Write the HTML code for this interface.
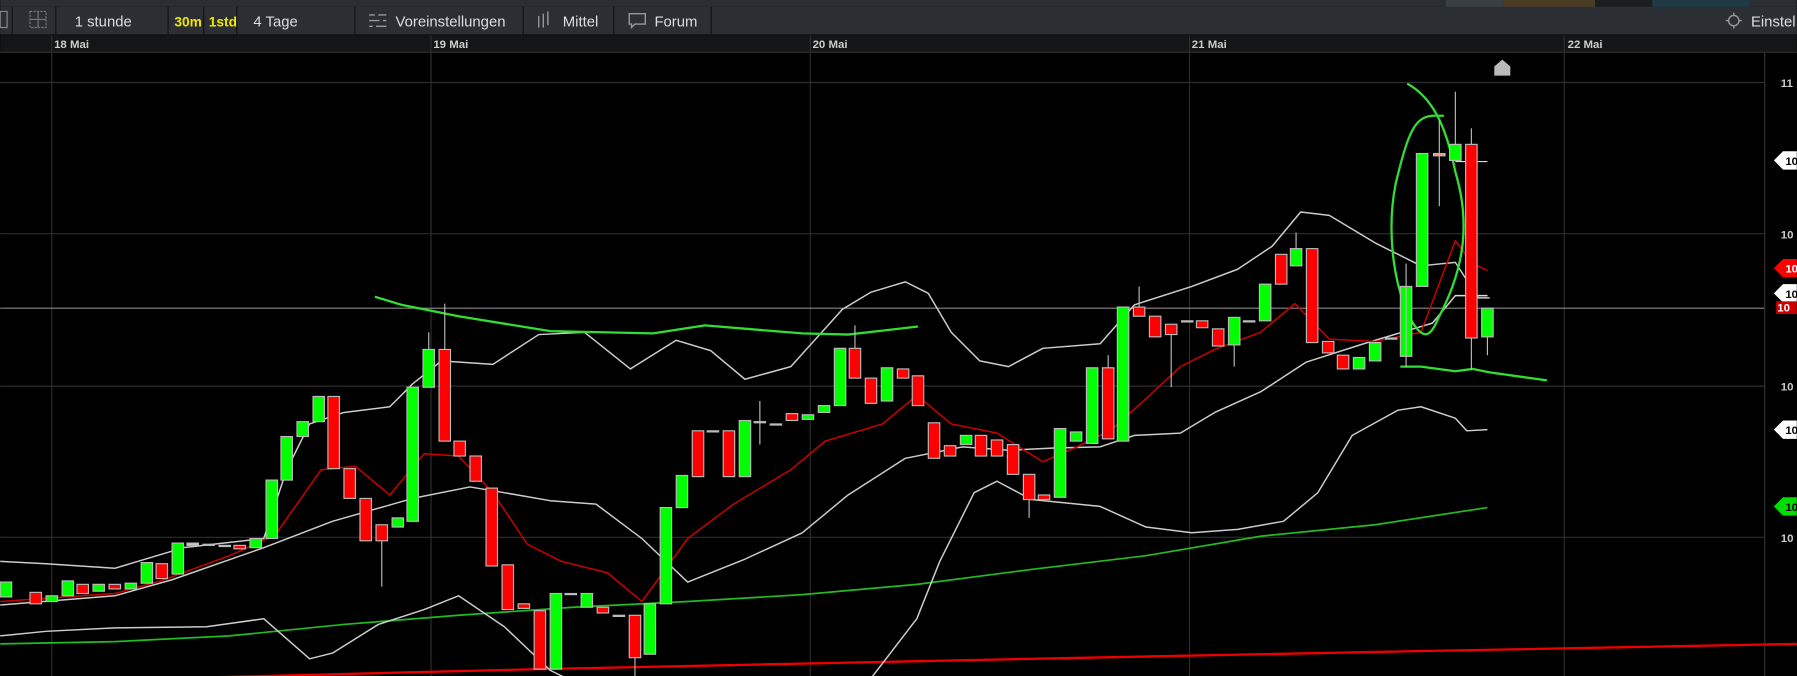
<!DOCTYPE html>
<html><head><meta charset="utf-8"><style>
html,body{margin:0;padding:0;background:#000;overflow:hidden}
svg{display:block}
text{font-family:"Liberation Sans",sans-serif}
</style></head><body>
<svg width="1797" height="676" viewBox="0 0 1568 590" xmlns="http://www.w3.org/2000/svg">
<rect width="1568" height="590" fill="#000"/>
<!-- top strip -->
<rect x="0" y="0" width="1568" height="6" fill="#2a2d31"/>
<rect x="1262" y="0" width="50" height="6" fill="#3a3f44"/>
<rect x="1312" y="0" width="80" height="6" fill="#4a3d24"/>
<rect x="1392" y="0" width="50" height="6" fill="#1c1f22"/>
<rect x="1442" y="0" width="85" height="6" fill="#1f3a44"/>
<!-- toolbar -->
<rect x="0" y="6" width="1568" height="24" fill="#2b2e33"/>
<rect x="0" y="30" width="1568" height="1" fill="#111"/>
<g fill="none" stroke="#111" stroke-width="1">
<line x1="10.5" y1="6" x2="10.5" y2="30"/><line x1="48.5" y1="6" x2="48.5" y2="30"/>
<line x1="146.5" y1="6" x2="146.5" y2="30"/><line x1="177.5" y1="6" x2="177.5" y2="30"/>
<line x1="206.5" y1="6" x2="206.5" y2="30"/><line x1="309.5" y1="6" x2="309.5" y2="30"/>
<line x1="456.5" y1="6" x2="456.5" y2="30"/><line x1="535.5" y1="6" x2="535.5" y2="30"/>
<line x1="620.5" y1="6" x2="620.5" y2="30"/>
</g>
<rect x="0" y="10" width="6" height="14" fill="none" stroke="#888" stroke-width="1"/>
<rect x="26" y="10" width="14" height="14" fill="none" stroke="#777" stroke-width="1" stroke-dasharray="2,1"/>
<line x1="26" y1="17" x2="40" y2="17" stroke="#777"/><line x1="33" y1="10" x2="33" y2="24" stroke="#777"/>
<g font-size="13" fill="#ddd">
<text x="65" y="23">1 stunde</text>
<text x="152" y="23" fill="#f2e600" font-weight="bold" font-size="12">30m</text>
<text x="182" y="23" fill="#f2e600" font-weight="bold" font-size="12">1std</text>
<text x="221" y="23">4 Tage</text>
<text x="345" y="23">Voreinstellungen</text>
<text x="491" y="23">Mittel</text>
<text x="571" y="23">Forum</text>
<text x="1528" y="23">Einstel</text>
</g>
<g stroke="#999" stroke-width="1.2" fill="none">
<path d="M322 13h5M330 13h7M322 18h9M334 18h3M322 23h3M328 23h9"/>
<path d="M470 14v10M474 12v12M478 10v12" />
<path d="M549 12h14v9h-9l-3 3v-3h-2z"/>
<circle cx="1513" cy="18" r="4.5"/>
<path d="M1513 11v2M1513 23v2M1506 18h2M1518 18h2"/>
</g>
<!-- date bar -->
<rect x="0" y="31" width="1568" height="14" fill="#141516"/>
<g font-size="10" fill="#ccc" font-weight="bold">
<text x="47" y="42">18 Mai</text><text x="378" y="42">19 Mai</text><text x="709" y="42">20 Mai</text>
<text x="1040" y="42">21 Mai</text><text x="1368" y="42">22 Mai</text>
</g>
<rect x="0" y="45" width="1568" height="1" fill="#333"/>
<!-- grid -->
<g stroke="#2e2e2e" stroke-width="1">
<line x1="45" y1="31" x2="45" y2="590"/><line x1="376" y1="31" x2="376" y2="590"/>
<line x1="707" y1="31" x2="707" y2="590"/><line x1="1038" y1="31" x2="1038" y2="590"/>
<line x1="1365" y1="31" x2="1365" y2="590"/>
<line x1="0" y1="72" x2="1540" y2="72"/><line x1="0" y1="204" x2="1540" y2="204"/>
<line x1="0" y1="337" x2="1540" y2="337"/><line x1="0" y1="469" x2="1540" y2="469"/>
</g>
<line x1="0" y1="269" x2="1540" y2="269" stroke="#888" stroke-width="1"/>
<!-- right axis -->
<line x1="1540" y1="45" x2="1540" y2="590" stroke="#333"/>
<g font-size="10" fill="#ccc" font-weight="bold">
<text x="1554" y="76">11</text><text x="1554" y="208">10</text><text x="1554" y="341">10</text><text x="1554" y="473">10</text>
</g>
<path d="M1548 140l8-8h12v16h-12z" fill="#fff"/><text x="1558" y="144" font-size="10" fill="#000" font-weight="bold">10</text>
<path d="M1548 234l8-8h12v16h-12z" fill="#f00"/><text x="1558" y="238" font-size="10" fill="#fff" font-weight="bold">10</text>
<path d="M1548 256l8-8h12v16h-12z" fill="#fff"/><text x="1558" y="260" font-size="10" fill="#000" font-weight="bold">10</text>
<rect x="1550" y="263" width="18" height="11" fill="#c00"/><text x="1551" y="272" font-size="10" fill="#fff" font-weight="bold">10</text>
<path d="M1548 375l8-8h12v16h-12z" fill="#fff"/><text x="1558" y="379" font-size="10" fill="#000" font-weight="bold">10</text>
<path d="M1548 442l8-8h12v16h-12z" fill="#0d0"/><text x="1558" y="446" font-size="10" fill="#000" font-weight="bold">10</text>
<path d="M1304 58l7-6 7 6v8h-14z" fill="#bbb"/>
<!-- indicator lines -->
<g fill="none" stroke-linejoin="round">
<polyline stroke="#22bb22" stroke-width="1.5" points="0,562 100,560 200,555 300,545 400,537 500,530 600,525 700,519 800,510 900,497 1000,485 1100,468 1200,458 1298,443"/>
<polyline stroke="#e00" stroke-width="2" points="150,592 470,584 900,575 1200,569 1568,562"/>
<polyline stroke="#ccc" stroke-width="1.3" points="0,490 40,492 100,496 160,478 230,470 250,410 270,370 300,360 340,355 360,335 385,315 430,318 470,292 510,290 550,322 590,297 620,306 650,331 690,320 735,270 760,255 790,246 810,256 830,290 855,315 880,320 910,304 960,300 990,266 1040,250 1080,235 1110,215 1135,185 1160,188 1200,212 1240,232 1270,229 1290,260 1300,260"/>
<polyline stroke="#ccc" stroke-width="1.3" points="0,555 40,551 100,548 180,547 230,540 270,575 290,570 330,545 370,532 400,520 440,547 480,585 500,595"/>
<polyline stroke="#ccc" stroke-width="1.3" points="760,592 800,540 820,490 850,430 870,420 900,436 960,442 1000,460 1040,465 1080,462 1120,455 1150,430 1180,380 1220,358 1240,355 1270,365 1280,376 1298,375"/>
<polyline stroke="#ccc" stroke-width="1.3" points="0,528 100,520 150,506 230,478 290,455 360,435 410,425 440,430 480,437 520,440 560,470 600,508 650,488 700,465 740,432 790,400 840,390 880,393 920,391 960,390 990,380 1030,378 1060,360 1100,342 1140,316 1190,300 1250,282 1270,258 1298,258"/>
<polyline stroke="#c00" stroke-width="1.3" points="0,525 100,518 140,507 200,485 240,467 280,410 310,407 340,432 370,396 400,398 430,430 460,475 490,490 530,500 560,525 600,470 640,440 690,410 720,385 770,370 800,345 830,370 870,378 910,403 940,390 970,375 1000,348 1030,320 1060,305 1100,290 1130,265 1160,296 1200,298 1240,290 1270,210 1285,230 1298,236"/>
<polyline stroke="#3d3" stroke-width="2" points="327,259 350,266 400,276 480,289 570,291 615,284 700,291 740,292 801,285"/>
<polyline stroke="#3d3" stroke-width="2" points="1222,320 1240,320 1270,324 1285,322 1300,325 1350,332"/>
<path stroke="#3d3" stroke-width="2" d="M1228,73 C1250,85 1262,110 1270,150 C1285,200 1275,240 1255,278 C1248,295 1242,296 1233,282 C1215,250 1210,200 1218,160 C1230,110 1236,100 1255,101 L1260,101"/>
<line x1="1270" y1="141" x2="1298" y2="141" stroke="#ddd"/>
<line x1="1270" y1="258" x2="1298" y2="258" stroke="#ddd"/>
</g>
<!-- candles -->
<g id="c" stroke="#bbb" stroke-width="1">
<script type="text/plain"></script>
</g>
<g stroke="#bbb" stroke-width="1">
<!-- x,top,bottom,color -->
<rect x="0" y="508" width="10" height="13" fill="#0f0"/>
<rect x="26" y="517" width="10" height="10" fill="#f00"/>
<rect x="40" y="520" width="10" height="5" fill="#0f0"/>
<rect x="54" y="507" width="10" height="13" fill="#0f0"/>
<rect x="67" y="510" width="10" height="8" fill="#f00"/>
<rect x="81" y="510" width="10" height="6" fill="#0f0"/>
<rect x="95" y="510" width="10" height="4" fill="#f00"/>
<rect x="109" y="509" width="10" height="5" fill="#0f0"/>
<rect x="123" y="491" width="10" height="18" fill="#0f0"/>
<rect x="136" y="492" width="10" height="13" fill="#f00"/>
<rect x="150" y="474" width="10" height="27" fill="#0f0"/>
<rect x="163" y="474" width="10" height="2" fill="#ccc"/>
<rect x="177" y="475" width="10" height="1" fill="#ccc"/>
<rect x="191" y="476" width="10" height="1" fill="#ccc"/>
<rect x="204" y="476" width="10" height="3" fill="#f00"/>
<rect x="218" y="470" width="10" height="8" fill="#0f0"/>
<rect x="232" y="419" width="10" height="51" fill="#0f0"/>
<rect x="245" y="381" width="10" height="38" fill="#0f0"/>
<rect x="259" y="368" width="10" height="13" fill="#0f0"/>
<rect x="273" y="346" width="10" height="22" fill="#0f0"/>
<rect x="286" y="346" width="10" height="63" fill="#f00"/>
<rect x="300" y="409" width="10" height="26" fill="#f00"/>
<rect x="314" y="435" width="10" height="37" fill="#f00"/>
<rect x="328" y="458" width="10" height="14" fill="#f00"/>
<rect x="342" y="452" width="10" height="8" fill="#0f0"/>
<rect x="355" y="338" width="10" height="117" fill="#0f0"/>
<rect x="369" y="305" width="10" height="33" fill="#0f0"/>
<rect x="383" y="305" width="10" height="80" fill="#f00"/>
<rect x="396" y="385" width="10" height="13" fill="#f00"/>
<rect x="410" y="398" width="10" height="22" fill="#f00"/>
<rect x="424" y="426" width="10" height="68" fill="#f00"/>
<rect x="438" y="493" width="10" height="39" fill="#f00"/>
<rect x="452" y="527" width="10" height="4" fill="#f00"/>
<rect x="466" y="533" width="10" height="51" fill="#f00"/>
<rect x="480" y="518" width="10" height="66" fill="#0f0"/>
<rect x="493" y="518" width="10" height="1" fill="#ccc"/>
<rect x="507" y="518" width="10" height="12" fill="#0f0"/>
<rect x="521" y="530" width="10" height="5" fill="#f00"/>
<rect x="535" y="537" width="10" height="1" fill="#ccc"/>
<rect x="549" y="537" width="10" height="37" fill="#f00"/>
<rect x="562" y="527" width="10" height="44" fill="#0f0"/>
<rect x="576" y="443" width="10" height="84" fill="#0f0"/>
<rect x="590" y="415" width="10" height="28" fill="#0f0"/>
<rect x="604" y="376" width="10" height="40" fill="#f00"/>
<rect x="617" y="376" width="10" height="1" fill="#ccc"/>
<rect x="631" y="376" width="10" height="40" fill="#f00"/>
<rect x="645" y="367" width="10" height="49" fill="#0f0"/>
<rect x="658" y="368" width="10" height="1" fill="#ccc"/>
<rect x="672" y="370" width="10" height="1" fill="#ccc"/>
<rect x="686" y="361" width="10" height="6" fill="#f00"/>
<rect x="700" y="362" width="10" height="4" fill="#0f0"/>
<rect x="714" y="354" width="10" height="6" fill="#0f0"/>
<rect x="728" y="304" width="10" height="50" fill="#0f0"/>
<rect x="741" y="304" width="10" height="26" fill="#f00"/>
<rect x="755" y="330" width="10" height="22" fill="#f00"/>
<rect x="769" y="321" width="10" height="29" fill="#0f0"/>
<rect x="783" y="322" width="10" height="8" fill="#f00"/>
<rect x="796" y="328" width="10" height="26" fill="#f00"/>
<rect x="810" y="369" width="10" height="31" fill="#f00"/>
<rect x="824" y="389" width="10" height="9" fill="#f00"/>
<rect x="838" y="380" width="10" height="8" fill="#0f0"/>
<rect x="851" y="380" width="10" height="18" fill="#f00"/>
<rect x="865" y="384" width="10" height="14" fill="#f00"/>
<rect x="879" y="388" width="10" height="26" fill="#f00"/>
<rect x="893" y="414" width="10" height="22" fill="#f00"/>
<rect x="906" y="432" width="10" height="4" fill="#f00"/>
<rect x="920" y="374" width="10" height="60" fill="#0f0"/>
<rect x="934" y="377" width="10" height="8" fill="#0f0"/>
<rect x="948" y="321" width="10" height="66" fill="#0f0"/>
<rect x="962" y="321" width="10" height="62" fill="#f00"/>
<rect x="975" y="268" width="10" height="117" fill="#0f0"/>
<rect x="989" y="268" width="10" height="8" fill="#f00"/>
<rect x="1003" y="276" width="10" height="18" fill="#f00"/>
<rect x="1017" y="283" width="10" height="9" fill="#f00"/>
<rect x="1031" y="280" width="10" height="1" fill="#ccc"/>
<rect x="1044" y="280" width="10" height="6" fill="#f00"/>
<rect x="1058" y="287" width="10" height="15" fill="#f00"/>
<rect x="1072" y="277" width="10" height="24" fill="#0f0"/>
<rect x="1085" y="280" width="10" height="1" fill="#ccc"/>
<rect x="1099" y="248" width="10" height="32" fill="#0f0"/>
<rect x="1113" y="222" width="10" height="26" fill="#f00"/>
<rect x="1126" y="217" width="10" height="15" fill="#0f0"/>
<rect x="1140" y="217" width="10" height="82" fill="#f00"/>
<rect x="1154" y="298" width="10" height="10" fill="#f00"/>
<rect x="1167" y="310" width="10" height="12" fill="#f00"/>
<rect x="1181" y="312" width="10" height="10" fill="#0f0"/>
<rect x="1195" y="299" width="10" height="16" fill="#0f0"/>
<rect x="1209" y="295" width="10" height="1" fill="#ccc"/>
<rect x="1222" y="250" width="10" height="61" fill="#0f0"/>
<rect x="1236" y="134" width="10" height="116" fill="#0f0"/>
<rect x="1251" y="134" width="10" height="2" fill="#f88"/>
<rect x="1265" y="126" width="10" height="14" fill="#0f0"/>
<rect x="1279" y="126" width="10" height="169" fill="#f00"/>
<rect x="1293" y="269" width="10" height="25" fill="#0f0"/>
</g>
<g stroke="#bbb" stroke-width="1">
<line x1="1270" y1="80" x2="1270" y2="126"/><line x1="1284" y1="112" x2="1284" y2="126"/>
<line x1="1284" y1="295" x2="1284" y2="323"/><line x1="1298" y1="294" x2="1298" y2="310"/>
<line x1="1256" y1="105" x2="1256" y2="180"/><line x1="1227" y1="230" x2="1227" y2="320"/>
<line x1="388" y1="265" x2="388" y2="305"/><line x1="374" y1="290" x2="374" y2="305"/>
<line x1="333" y1="472" x2="333" y2="512"/><line x1="554" y1="574" x2="554" y2="590"/>
<line x1="898" y1="436" x2="898" y2="452"/><line x1="994" y1="250" x2="994" y2="268"/>
<line x1="1022" y1="292" x2="1022" y2="338"/><line x1="1077" y1="301" x2="1077" y2="320"/>
<line x1="1131" y1="203" x2="1131" y2="217"/><line x1="746" y1="284" x2="746" y2="304"/>
<line x1="663" y1="350" x2="663" y2="388"/><line x1="967" y1="310" x2="967" y2="321"/>
</g>
</svg>
</body></html>
